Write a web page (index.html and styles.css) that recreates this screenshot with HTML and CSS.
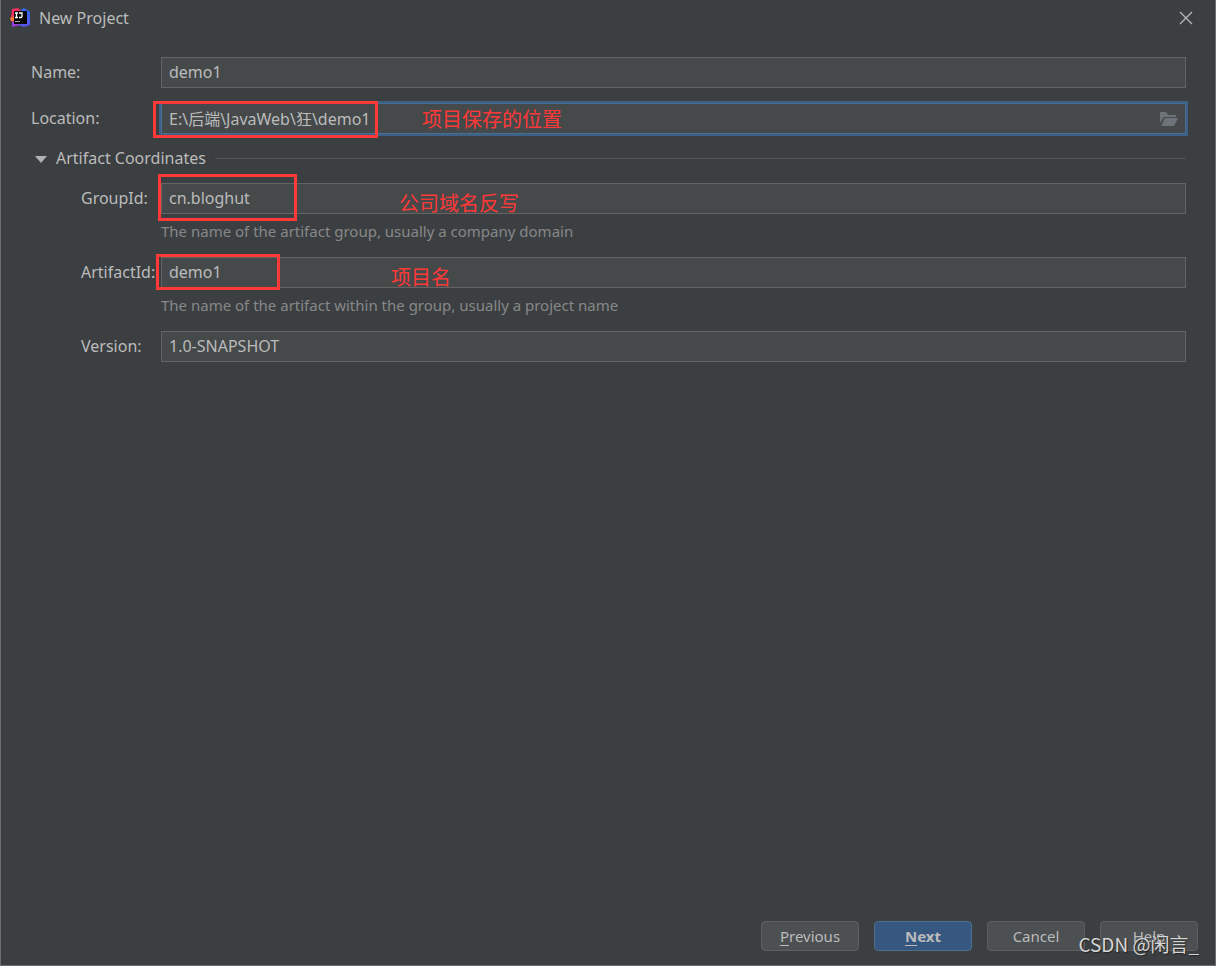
FILE: index.html
```html
<!DOCTYPE html>
<html lang="en">
<head>
<meta charset="utf-8">
<title>New Project</title>
<link rel="stylesheet" href="styles.css">
</head>
<body>
<main class="dialog">
  <header class="titlebar">
    <svg class="logo" viewBox="0 0 20 20" aria-hidden="true">
      <defs>
        <linearGradient id="cool" x1="0" y1="0" x2="0" y2="1"><stop offset="0" stop-color="#2f6bf5"/><stop offset="1" stop-color="#5a52ea"/></linearGradient>
      </defs>
      <path fill="url(#cool)" d="M11 2l3-2 6 4v13l-6 2-6-2z"/>
      <path fill="#fb2d62" d="M2 1l6-1 4 4-2 6-9 1z"/>
      <path fill="#f97a2c" d="M0 10l5-2v6l-4-1z"/>
      <path fill="#9a3bdc" d="M2 13l8 4-8 2z"/>
      <path fill="#080808" d="M4 3h13v13H4z"/>
      <path fill="none" stroke="#fff" stroke-width="1.300" d="M5 5h3M6.500 5v4.500M5 9.500h3M9 5h3v3.500q0 1-1 1H9"/>
      <path fill="#aaa" d="M5 13h5v1H5z"/>
    </svg>
    <h1 class="title">New Project</h1>
    <button class="close" type="button" aria-label="Close">
      <svg viewBox="0 0 14 14" width="14" height="14"><path d="M1 1l12 12M13 1L1 13" fill="none" stroke="#b8babb" stroke-width="1.200"/></svg>
    </button>
  </header>

  <form class="form">
    <div class="row">
      <label for="name">Name:</label>
      <div class="field"><input id="name" type="text" value="demo1"></div>
    </div>
    <div class="row">
      <label for="location">Location:</label>
      <div class="field focused">
        <input id="location" type="text" value="E:\后端\JavaWeb\狂\demo1">
        <button class="browse" type="button" aria-label="Browse">
          <svg viewBox="0 0 20 16" width="20" height="16"><path fill="#6c7479" d="M1 1h6l2 3h8v2H5L1 12zM6 7h13l-4 8H2z"/></svg>
        </button>
        <span class="mark mark-location"></span>
        <span class="note note-location">项目保存的位置</span>
      </div>
    </div>

    <section class="section">
      <button class="section-head" type="button" aria-expanded="true">
        <svg viewBox="0 0 12 8" width="12" height="8"><path fill="#afb1b3" d="M0 1h12L6 8z"/></svg>
        <span>Artifact Coordinates</span>
      </button>
      <div class="row nested">
        <label for="group">GroupId:</label>
        <div class="field">
          <input id="group" type="text" value="cn.bloghut">
          <span class="mark mark-group"></span>
          <span class="note note-group">公司域名反写</span>
        </div>
        <p class="hint">The name of the artifact group, usually a company domain</p>
      </div>
      <div class="row nested">
        <label for="artifact">ArtifactId:</label>
        <div class="field">
          <input id="artifact" type="text" value="demo1">
          <span class="mark mark-artifact"></span>
          <span class="note note-artifact">项目名</span>
        </div>
        <p class="hint">The name of the artifact within the group, usually a project name</p>
      </div>
      <div class="row nested">
        <label for="version">Version:</label>
        <div class="field"><input id="version" type="text" value="1.0-SNAPSHOT"></div>
      </div>
    </section>
  </form>

  <footer class="actions">
    <button class="btn" type="button"><u>P</u>revious</button>
    <button class="btn primary" type="button"><u>N</u>ext</button>
    <button class="btn" type="button">Cancel</button>
    <button class="btn" type="button">Help</button>
    <span class="watermark">CSDN @闲言_</span>
  </footer>
</main>
</body>
</html>
```

FILE: styles.css
```css
* {
  box-sizing: border-box;
}

body {
  margin: 0;
  background: #3c3f41;
  color: #bbbbbb;
  font: 16px/20px "Noto Sans", "Noto Sans CJK SC", sans-serif;
}

button,
input {
  font: inherit;
  color: inherit;
}

.dialog {
  display: flex;
  flex-direction: column;
  min-height: 100vh;
  border: 1px solid #6a6d6f;
  border-top: 0;
}

.titlebar {
  display: flex;
  align-items: center;
  height: 36px;
  padding: 0 22px 0 9px;
}

.logo {
  width: 20px;
  height: 20px;
  margin-right: 9px;
}

.title {
  flex: 1;
  margin: 0;
  font-size: 16px;
  font-weight: 400;
}

.close,
.browse,
.section-head {
  display: flex;
  align-items: center;
  padding: 0;
  border: 0;
  background: none;
}

.form {
  flex: 1;
  display: flex;
  flex-direction: column;
  gap: 15px;
  padding: 21px 29px 0 30px;
}

.row {
  display: grid;
  grid-template-columns: 130px 1fr;
  align-items: center;
}

.nested {
  grid-template-columns: 80px 1fr;
  margin-left: 50px;
}

.row label {
  padding-bottom: 2px;
  white-space: nowrap;
}

.field {
  position: relative;
  display: flex;
  align-items: center;
  height: 31px;
  border: 1px solid #646464;
  background: #45494a;
}

.field input {
  flex: 1;
  min-width: 0;
  height: 29px;
  padding: 0 7px 2px;
  border: 0;
  outline: 0;
  background: none;
}

.focused {
  border-color: #466d94;
  box-shadow: 0 0 0 2px #3d6185;
}

.browse {
  margin-right: 6px;
}

.section-head {
  width: 100%;
  height: 49px;
  padding-left: 4px;
  margin-top: -15px;
  gap: 9px;
}

.section-head span {
  padding-bottom: 2px;
}

.section-head::after {
  content: "";
  flex: 1;
  height: 1px;
  background: #515456;
}

.hint {
  grid-column: 2;
  height: 43px;
  margin: 0;
  padding-top: 7px;
  color: #868889;
  font-size: 15px;
}

.mark {
  position: absolute;
  border: 3px solid #ff3838;
  pointer-events: none;
}

.mark-location {
  left: -9px;
  top: -3px;
  width: 225px;
  height: 37px;
}

.mark-group {
  left: -4px;
  top: -10px;
  width: 139px;
  height: 47px;
}

.mark-artifact {
  left: -6px;
  top: -4px;
  width: 124px;
  height: 36px;
}

.note {
  position: absolute;
  color: #ff3838;
  font: 400 20px/24px "Noto Sans CJK SC", sans-serif;
  white-space: nowrap;
  pointer-events: none;
}

.note-location {
  left: 260px;
  top: 3px;
}

.note-group {
  left: 237px;
  top: 7px;
}

.note-artifact {
  left: 229px;
  top: 7px;
}

.actions {
  position: relative;
  display: flex;
  justify-content: flex-end;
  gap: 15px;
  padding: 0 17px 14px;
}

.btn {
  width: 98px;
  height: 30px;
  padding: 0;
  border: 1px solid #5e6060;
  border-radius: 4px;
  background: #4c5052;
  font-size: 15px;
}

.btn u {
  text-underline-offset: 3px;
}

.primary {
  border-color: #4c708c;
  background: #365880;
  font-weight: 700;
}

.watermark {
  position: absolute;
  right: 16px;
  bottom: 9px;
  color: #d6d6d6;
  font: 19px/24px "Noto Sans CJK SC", sans-serif;
  text-shadow: 1px 1px 1px #222222;
  pointer-events: none;
}
```
